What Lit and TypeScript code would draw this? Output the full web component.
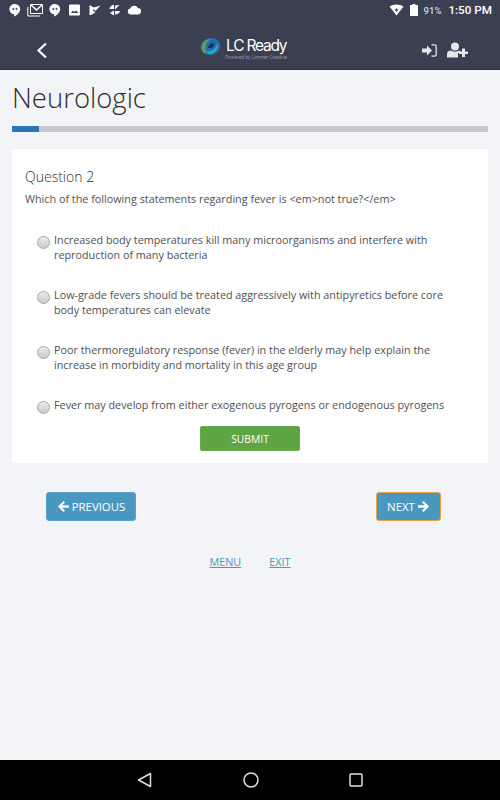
import { LitElement, html, css, svg } from "lit";
import { customElement } from "lit/decorators.js";

const options = [
  "Increased body temperatures kill many microorganisms and interfere with reproduction of many bacteria",
  "Low-grade fevers should be treated aggressively with antipyretics before core body temperatures can elevate",
  "Poor thermoregulatory response (fever) in the elderly may help explain the increase in morbidity and mortality in this age group",
  "Fever may develop from either exogenous pyrogens or endogenous pyrogens",
];

const arrowLeft = svg`<path d="M1 6.5 6.5 1 8 2.5 5 5.2H12V7.8H5L8 10.5 6.5 12Z" fill="#fff"/>`;
const arrowRight = svg`<path d="M12 6.5 6.5 1 5 2.5 8 5.2H1V7.8H8L5 10.5 6.5 12Z" fill="#fff"/>`;

@customElement("app-root")
export class AppRoot extends LitElement {
  static styles = css`
    :host { display: block; width: 500px; height: 800px; font-family: "Open Sans", sans-serif; background: #f3f4f8; }
    .page { height: 800px; display: flex; flex-direction: column; }
    .top { height: 69px; background: #3b3f52; border-bottom: 1px solid #2d3040; display: flex; flex-direction: column; flex: none; }
    .status { height: 20px; display: flex; align-items: center; padding: 0 8px 0 9px; color: #fff; font-family: Roboto, sans-serif; flex: none; }
    .status svg { display: block; flex: none; }
    .notif { display: flex; align-items: center; gap: 5px; }
    .m1 { margin-left: 1px; }
    .m3 { margin-left: 3px; }
    .m2 { margin-left: 2px; }
    .sys { margin-left: auto; display: flex; align-items: center; }
    .bat-ic { margin-left: 6px; }
    .batt { font-size: 9.5px; font-weight: 500; color: #d5d6db; margin: 0 7px 0 6px; }
    .time { font-size: 11.7px; font-weight: 500; }
    .bar { flex: 1; display: grid; grid-template-columns: 164px auto 1fr; align-items: center; padding: 11px 32px 0 36px; }
    .back { display: block; }
    .logo { display: flex; align-items: center; gap: 5px; margin-bottom: 2px; }
    .logo svg { margin-bottom: 5px; }
    .brand { display: flex; flex-direction: column; color: #fff; }
    .lc { font-family: Inter, sans-serif; font-size: 15.5px; line-height: 17px; letter-spacing: -1.2px; }
    .pow { font-family: Roboto, sans-serif; font-size: 4.9px; line-height: 7px; color: #8f92a0; margin-left: -1px; }
    .actions { justify-self: end; display: flex; align-items: center; gap: 10px; }
    main { flex: 1; padding: 0 12px; display: flex; flex-direction: column; }
    h1 { margin: 8px 0 0; font-size: 27.5px; line-height: 40px; font-weight: 300; color: #2e2e2e; }
    .progress { height: 6px; background: #c8c9cb; margin-top: 8px; }
    .fill { height: 100%; background: #2a75bb; }
    .card { background: #fff; margin-top: 17px; padding: 18px 13px 12px; height: 314px; box-sizing: border-box; display: flex; flex-direction: column; }
    .qn { font-size: 14px; line-height: 20px; font-weight: 300; color: #333; }
    .qt { font-size: 10.8px; line-height: 15px; color: #505050; margin-top: 4px; }
    .opts { display: flex; flex-direction: column; gap: 25px; margin-top: 26px; padding-left: 12px; padding-right: 20px; }
    .opt { display: flex; gap: 4px; font-size: 10.8px; line-height: 15px; color: #505050; }
    .radio { flex: none; width: 13px; height: 13px; box-sizing: border-box; margin-top: 4px; border-radius: 50%; border: 1px solid #a8a8a8; background: linear-gradient(#ececec, #c9c9c9); }
    .submit { align-self: center; margin-top: 12px; width: 100px; height: 25px; box-sizing: border-box; background: #5fa544; border: 1px solid #69ad4d; border-radius: 2px; color: #fff; font: 400 10.3px "Open Sans", sans-serif; padding: 0; }
    .pager { display: flex; justify-content: space-between; padding: 29px 47px 0 34px; }
    .btn { height: 29px; box-sizing: border-box; background: #4a98c2; border: 1px solid #5ba3ca; border-radius: 3px; color: #fff; font: 400 11.4px "Open Sans", sans-serif; display: flex; align-items: center; justify-content: center; gap: 2px; padding: 0; }
    .prev { width: 90px; }
    .next { width: 65px; border-color: #e8a33d; }
    .links { display: flex; justify-content: center; gap: 28px; margin-top: 33px; }
    .links a { font-size: 10.8px; line-height: 15px; color: #4a98c2; text-decoration: underline; }
    .nav { height: 40px; background: #000; flex: none; display: flex; align-items: center; justify-content: center; gap: 90px; }
  `;

  render() {
    return html`<div class="page">
      <div class="top">
        <div class="status">
          <div class="notif">
            <svg width="12" height="14" viewBox="0 0 12 14"><path d="M6 1a5.2 5.2 0 0 0-.8 10.4V13.500C8 12 11.200 9.500 11.200 6.200A5.200 5.200 0 0 0 6 1Z" fill="#fff"/><circle cx="4.300" cy="6" r="1" fill="#3b3f52"/><circle cx="7.500" cy="6" r="1" fill="#3b3f52"/></svg>
            <svg class="m1" width="16" height="13" viewBox="0 0 16 13"><path d="M3.500.5H15.500V9.500H3.500Z" fill="none" stroke="#fff"/><path d="M.8 3V12H13" fill="none" stroke="#fff"/><path d="M4 1 9.500 6 15 1" fill="none" stroke="#fff" stroke-width="1.500"/></svg>
            <svg class="m1" width="12" height="14" viewBox="0 0 12 14"><path d="M6 1a5.200 5.200 0 0 0-.8 10.400V13.500C8 12 11.200 9.500 11.200 6.200A5.200 5.200 0 0 0 6 1Z" fill="#fff"/><circle cx="4.300" cy="6" r="1" fill="#3b3f52"/><circle cx="7.500" cy="6" r="1" fill="#3b3f52"/></svg>
            <svg class="m3" width="12" height="12" viewBox="0 0 12 12"><rect width="11" height="11" y=".5" rx="1" fill="#fff"/><path d="M2 9 4 6.500 5.500 8 7 6.500 9.500 9Z" fill="#3b3f52"/></svg>
            <svg class="m3" width="12" height="12" viewBox="0 0 12 12"><path d="M.5 1 5 3.500 11.500 1.500 6.500 7 4.500 5 4 6.500 6.500 8.500 2 11 .5 11Z" fill="#fff"/></svg>
            <svg class="m2" width="13" height="12" viewBox="0 0 13 12"><path d="M6 0.500V5H1.500C1.500 3 3.500 1 6 .5ZM7 1.500 11.500 1 7 5.500ZM6 6.500V11.500L2 9ZM7 7H12C11.500 9 9.500 10.500 7 10.500Z" fill="#fff"/></svg>
            <svg class="m1" width="15" height="10" viewBox="0 0 15 10"><path d="M3.500 9.500A3 3 0 0 1 3 3.600 4.500 4.500 0 0 1 11 3 3.300 3.300 0 0 1 11.500 9.500Z" fill="#fff"/></svg>
          </div>
          <div class="sys">
            <svg width="15" height="12" viewBox="0 0 15 12"><path d="M.5 2.500C4 -.3 11 -.3 14.500 2.500L7.500 11.500Z" fill="#fff"/><path d="M7.500 4 9 6 7.500 8 6 6Z" fill="#3b3f52"/></svg>
            <svg class="bat-ic" width="8" height="12" viewBox="0 0 8 12"><path d="M2.500 0H5.500V1H8V12H0V1H2.500Z" fill="#fff"/></svg>
            <span class="batt">91%</span><span class="time">1:50 PM</span>
          </div>
        </div>
        <div class="bar">
          <svg class="back" width="12" height="17" viewBox="0 0 12 17"><path d="M10 1.500 2.500 8.500 10 15.500" fill="none" stroke="#fff" stroke-width="2.200"/></svg>
          <div class="logo">
            <svg width="21" height="19" viewBox="0 0 21 19"><ellipse cx="10.500" cy="9.500" rx="10" ry="8.500" transform="rotate(-15 10.500 9.500)" fill="#1f6ea8"/><path d="M1.500 12C1 6 6 1.500 12 2 7 3.500 4.500 8 6 14 7 17 4 17.500 1.500 12Z" fill="#6f9a55"/><path d="M8 11C9 6 13 5 14 7.500 15 10 11 11.500 8 11Z" fill="#1b2f55"/><path d="M6.500 14C11 15 16 12 17.500 6 20 11 15 18 9 17 7.500 16.800 7 15.500 6.500 14Z" fill="#2aa6c4"/></svg>
            <div class="brand"><span class="lc">LC Ready</span><span class="pow">Powered by Limmer Creative</span></div>
          </div>
          <div class="actions">
            <svg width="15" height="13" viewBox="0 0 15 13"><path d="M0 4.500H5V1.500L10 6.500 5 11.500V8.500H0Z" fill="#e6e7ea"/><path d="M9.500.8H12.500C13.500.8 14.200 1.500 14.200 2.500V10.500C14.200 11.500 13.500 12.200 12.500 12.200H9.500" fill="none" stroke="#e6e7ea" stroke-width="1.300"/></svg>
            <svg width="21" height="16" viewBox="0 0 21 16"><circle cx="8" cy="4.500" r="4" fill="#e6e7ea"/><path d="M0 15.500V12C0 9.500 2 8.500 4 8.500 6 10 10 10 12 8.500 13 9 14 9.500 14 11H11V15.500Z" fill="#e6e7ea"/><path d="M15 6.500H18V9.500H21V12H18V15H15V12H12V9.500H15Z" fill="#e6e7ea"/></svg>
          </div>
        </div>
      </div>
      <main>
        <h1>Neurologic</h1>
        <div class="progress"><div class="fill" style="width: ${(27 / 476) * 100}%"></div></div>
        <div class="card">
          <div class="qn">Question 2</div>
          <div class="qt">Which of the following statements regarding fever is &lt;em&gt;not true?&lt;/em&gt;</div>
          <div class="opts">
            ${options.map((o) => html`<div class="opt"><span class="radio"></span><span>${o}</span></div>`)}
          </div>
          <button class="submit">SUBMIT</button>
        </div>
        <div class="pager">
          <button class="btn prev"><svg width="13" height="13" viewBox="0 0 13 13">${arrowLeft}</svg>PREVIOUS</button>
          <button class="btn next">NEXT<svg width="13" height="13" viewBox="0 0 13 13">${arrowRight}</svg></button>
        </div>
        <div class="links"><a>MENU</a><a>EXIT</a></div>
      </main>
      <div class="nav">
        <svg width="16" height="16" viewBox="0 0 16 16"><path d="M13.500 1.500V14.500L1.500 8Z" fill="none" stroke="#e0e0e0" stroke-width="1.500" stroke-linejoin="round"/></svg>
        <svg width="16" height="16" viewBox="0 0 16 16"><circle cx="8" cy="8" r="7" fill="none" stroke="#e0e0e0" stroke-width="1.500"/></svg>
        <svg width="14" height="14" viewBox="0 0 14 14"><rect x="1" y="1" width="12" height="12" rx="1" fill="none" stroke="#e0e0e0" stroke-width="1.500"/></svg>
      </div>
    </div>`;
  }
}
